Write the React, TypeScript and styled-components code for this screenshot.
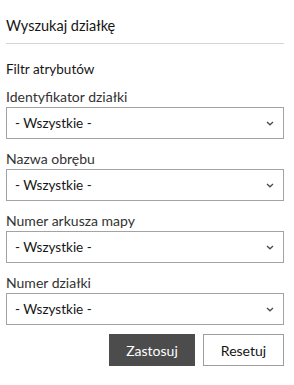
import styled, { createGlobalStyle } from 'styled-components';

const GlobalStyle = createGlobalStyle`
  body {
    margin: 0;
    background: #ffffff;
    font-family: Lato, "Open Sans", sans-serif;
    color: #151515;
  }
`;

const fields = [
  'Identyfikator działki',
  'Nazwa obrębu',
  'Numer arkusza mapy',
  'Numer działki',
];

const Chevron = () => (
  <svg width="8" height="5" viewBox="0 0 8 5">
    <path d="M1 1 L4 3.8 L7 1" fill="none" stroke="#4a4a4a" strokeWidth="1.3" />
  </svg>
);

const App = () => {
  return (
    <>
      <GlobalStyle />
      <Panel>
        <Header>
          <Title>Wyszukaj działkę</Title>
        </Header>
        <Section>
          <SectionTitle>Filtr atrybutów</SectionTitle>
          {fields.map((label) => (
            <Field key={label}>
              <Label>{label}</Label>
              <Select>
                <SelectText>- Wszystkie -</SelectText>
                <Chevron />
              </Select>
            </Field>
          ))}
          <Actions>
            <Button primary>Zastosuj</Button>
            <Button>Resetuj</Button>
          </Actions>
        </Section>
      </Panel>
    </>
  );
};

export default App;

const Panel = styled.div`
  width: 294px;
  height: 385px;
  padding: 0 10px 0 6px;
  box-sizing: border-box;
`;

const Header = styled.div`
  padding: 16px 0 7px;
  border-bottom: 1px solid #d4d4d4;
`;

const Title = styled.div`
  font-size: 14.5px;
  line-height: 20px;
  color: #151515;
`;

const Section = styled.div`
  padding-top: 15px;
`;

const SectionTitle = styled.div`
  font-size: 13.5px;
  line-height: 20px;
  color: #151515;
`;

const Field = styled.div`
  margin-top: 8px;

  & + & {
    margin-top: 10px;
  }
`;

const Label = styled.div`
  font-size: 14px;
  line-height: 20px;
  color: #323232;
`;

const Select = styled.div`
  display: flex;
  align-items: center;
  justify-content: space-between;
  height: 32px;
  padding: 0 9px 0 8px;
  border: 1px solid #a3a3a3;
  box-sizing: border-box;
  background: #ffffff;
`;

const SelectText = styled.span`
  font-size: 13.5px;
  color: #151515;
`;

const Actions = styled.div`
  display: flex;
  justify-content: flex-end;
  gap: 8px;
  margin-top: 9px;
`;

const Button = styled.button<{ primary?: boolean }>`
  height: 32px;
  padding: 0 15px;
  font-family: Lato, "Open Sans", sans-serif;
  font-size: 14px;
  border: 1px solid ${(p) => (p.primary ? '#4c4c4c' : '#9e9e9e')};
  background: ${(p) => (p.primary ? '#4c4c4c' : '#ffffff')};
  color: ${(p) => (p.primary ? '#ffffff' : '#151515')};
  min-width: ${(p) => (p.primary ? '86px' : '81px')};
  cursor: pointer;
`;
